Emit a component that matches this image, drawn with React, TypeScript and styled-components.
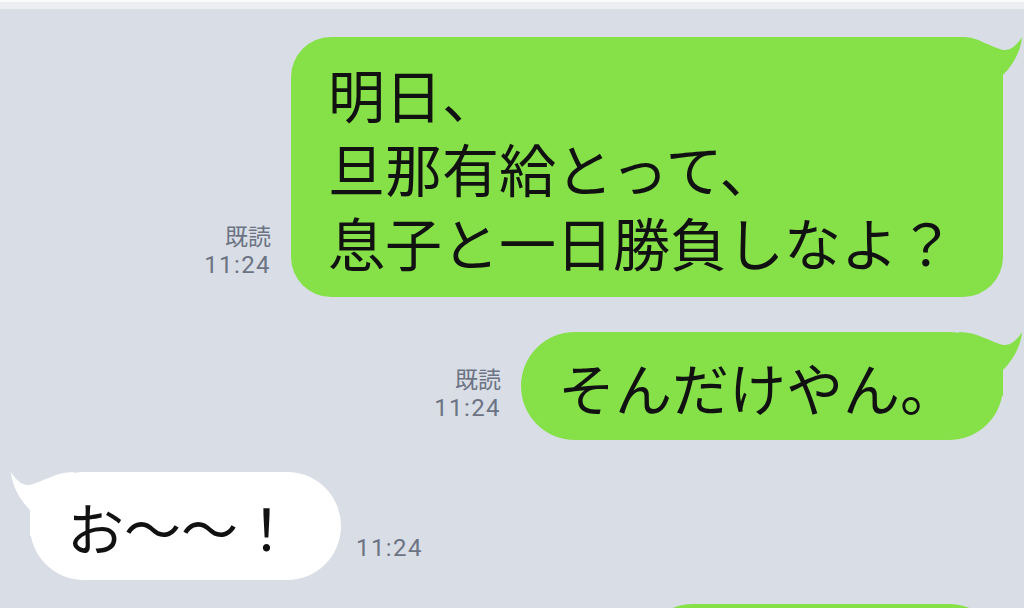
import styled, { createGlobalStyle } from 'styled-components'

const GlobalStyle = createGlobalStyle`
  html, body {
    margin: 0;
    padding: 0;
    background: #d8dde6;
  }
  body {
    font-family: "Noto Sans CJK JP", "Noto Sans", sans-serif;
  }
`

const Screen = styled.div`
  width: 1024px;
  height: 608px;
  overflow: hidden;
  background: #d8dde6;
  display: flex;
  flex-direction: column;
`

const TopBar = styled.div`
  height: 7px;
  flex: none;
  border-top: 2px solid #fafafb;
  background: #eceef2;
`

const Thread = styled.div`
  display: flex;
  flex-direction: column;
  padding: 28px 21px 0 30px;
`

const Row = styled.div<{ $side: 'left' | 'right'; $gap?: number }>`
  display: flex;
  align-items: flex-end;
  justify-content: ${({ $side }) => ($side === 'right' ? 'flex-end' : 'flex-start')};
  gap: ${({ $side }) => ($side === 'right' ? '20px' : '15px')};
  margin-top: ${({ $gap }) => ($gap ? `${$gap}px` : '0')};
  flex: none;
`

const Meta = styled.div`
  display: flex;
  flex-direction: column;
  align-items: flex-end;
  padding-bottom: 17px;
  color: #6c7383;
`

const Read = styled.span`
  font-family: "Noto Sans CJK JP", sans-serif;
  font-size: 23px;
  line-height: 30px;
`

const Time = styled.span`
  font-family: Roboto, "Liberation Sans", sans-serif;
  font-size: 24px;
  line-height: 30px;
  letter-spacing: 1.4px;
`

const Bubble = styled.div<{ $tone: 'green' | 'white'; $round?: boolean }>`
  position: relative;
  padding: ${({ $round }) => ($round ? '17px 46px 17px 37px' : '19px 48px 19px 37px')};
  border-radius: ${({ $round }) => ($round ? '54px' : '40px')};
  background: ${({ $tone }) => ($tone === 'green' ? '#86e149' : '#ffffff')};
  color: #111;
  font-family: "Noto Sans CJK JP", sans-serif;
  font-size: 57px;
  line-height: 74px;
  white-space: nowrap;
`

const Peek = styled.div`
  width: 364px;
  height: 108px;
  border-radius: 54px;
  background: #86e149;
`

const TailSvg = styled.svg<{ $side: 'left' | 'right' }>`
  position: absolute;
  top: 0;
  width: 70px;
  height: 64px;
  overflow: visible;
  ${({ $side }) =>
    $side === 'right'
      ? 'left: calc(100% - 50px);'
      : 'right: calc(100% - 50px); transform: scaleX(-1);'}
`

const Tail = ({ side, color }: { side: 'left' | 'right'; color: string }) => (
  <TailSvg $side={side} viewBox="-50 0 70 64">
    <path
      d="M -44 0 C -26 0, -12 10, 0 13 C 8 14, 14 8, 19 0 C 18 14, 10 28, 0 38 L 0 64 L -44 64 Z"
      fill={color}
    />
  </TailSvg>
)

const App = () => {
  return (
    <Screen>
      <GlobalStyle />
      <TopBar />
      <Thread>
        <Row $side="right">
          <Meta>
            <Read>既読</Read>
            <Time>11:24</Time>
          </Meta>
          <Bubble $tone="green">
            明日、
            <br />
            旦那有給とって、
            <br />
            息子と一日勝負しなよ？
            <Tail side="right" color="#86e149" />
          </Bubble>
        </Row>

        <Row $side="right" $gap={35}>
          <Meta>
            <Read>既読</Read>
            <Time>11:24</Time>
          </Meta>
          <Bubble $tone="green" $round>
            そんだけやん。
            <Tail side="right" color="#86e149" />
          </Bubble>
        </Row>

        <Row $side="left" $gap={32}>
          <Bubble $tone="white" $round>
            お～～！
            <Tail side="left" color="#ffffff" />
          </Bubble>
          <Meta>
            <Time>11:24</Time>
          </Meta>
        </Row>

        <Row $side="right" $gap={24}>
          <Peek />
        </Row>
      </Thread>
    </Screen>
  )
}

export default App
